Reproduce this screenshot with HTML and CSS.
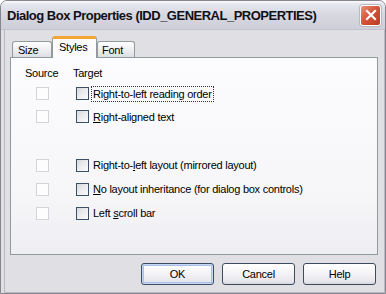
FILE: index.html
```html
<!DOCTYPE html>
<html lang="en">
<head>
  <meta charset="UTF-8" />
  <title>Dialog Box Properties</title>
  <link rel="stylesheet" href="styles.css">
</head>
<body>

<div class="ventana">
  <div class="barra_titulo">
    <span class="titulo">Dialog Box Properties (IDD_GENERAL_PROPERTIES)</span>
    <span class="cerrar">
      <svg width="12" height="12" viewBox="0 0 12 12">
        <path d="M2 2 L10 10 M10 2 L2 10" stroke="#fff" stroke-width="2.2" stroke-linecap="square" />
      </svg>
    </span>
  </div>

  <div class="cliente">
    <!-- pestañas -->
    <div class="pestanas">
      <div class="pestana p_size">Size</div>
      <div class="pestana activa">Styles</div>
      <div class="pestana p_font">Font</div>
    </div>

    <div class="panel">
      <div class="fila cabecera">
        <span class="col_origen">Source</span>
        <span class="col_destino">Target</span>
      </div>

      <div class="fila">
        <span class="col_origen"><span class="casilla apagada"></span></span>
        <span class="col_destino"><span class="casilla"></span><span class="texto foco">Ri<u>g</u>ht-to-left reading order</span></span>
      </div>
      <div class="fila">
        <span class="col_origen"><span class="casilla apagada"></span></span>
        <span class="col_destino"><span class="casilla"></span><span class="texto"><u>R</u>ight-aligned text</span></span>
      </div>

      <div class="grupo">
        <div class="fila alta">
          <span class="col_origen"><span class="casilla apagada"></span></span>
          <span class="col_destino"><span class="casilla"></span><span class="texto">Right-to-<u>l</u>eft layout (mirrored layout)</span></span>
        </div>
        <div class="fila alta">
          <span class="col_origen"><span class="casilla apagada"></span></span>
          <span class="col_destino"><span class="casilla"></span><span class="texto"><u>N</u>o layout inheritance (for dialog box controls)</span></span>
        </div>
        <div class="fila alta">
          <span class="col_origen"><span class="casilla apagada"></span></span>
          <span class="col_destino"><span class="casilla"></span><span class="texto">Left <u>s</u>croll bar</span></span>
        </div>
      </div>
    </div>

    <div class="botones">
      <button type="button" class="boton defecto">OK</button>
      <button type="button" class="boton">Cancel</button>
      <button type="button" class="boton">Help</button>
    </div>
  </div>
</div>

</body>
</html>
```

FILE: styles.css
```css
html, body {
  margin: 0;
  padding: 0;
  background: #fff;
}

.ventana {
  width: 386px;
  height: 294px;
  box-sizing: border-box;
  border: 1px solid #85848f;
  border-radius: 7px 7px 0 0;
  background: #e0dfe3;
  display: flex;
  flex-direction: column;
  font-family: 'Liberation Sans', Arial, sans-serif;
  font-size: 11px;
  letter-spacing: -0.25px;
  color: #000;
  overflow: hidden;
}

.barra_titulo {
  height: 28px;
  flex: none;
  display: flex;
  align-items: center;
  justify-content: space-between;
  padding: 0 4px 0 6px;
  background: linear-gradient(#fdfdfd 0, #e6e6ee 3px, #d7d7e0 50%, #cfcfd9 100%);
  border-bottom: 1px solid #c2c2cc;
}

.titulo {
  font-weight: bold;
  font-size: 13px;
  letter-spacing: -0.5px;
  color: #101018;
  padding-top: 1px;
}

.cerrar {
  width: 19px;
  height: 19px;
  border: 1px solid #fff;
  border-radius: 3px;
  background: linear-gradient(135deg, #e9917b 0%, #d2573c 45%, #bb3a20 100%);
  display: flex;
  align-items: center;
  justify-content: center;
  box-shadow: 0 0 0 1px #b9b9c4;
}

.cliente {
  flex: 1;
  display: flex;
  flex-direction: column;
  padding: 6px 7px 0 9px;
  box-shadow: inset 3px 0 0 #e0dfe3, inset 4px 0 0 #b9b8c3, inset -1px 0 0 #b9b8c3, inset 0 -1px 0 #b9b8c3;
}

.pestanas {
  display: flex;
  align-items: flex-end;
  height: 21px;
  padding-left: 2px;
}

.pestana {
  box-sizing: border-box;
  height: 16px;
  line-height: 16px;
  padding-left: 5px;
  border: 1px solid #919b9c;
  border-bottom: none;
  border-radius: 3px 3px 0 0;
  background: linear-gradient(#fefefe, #ececf0 60%, #dcdce4);
  position: relative;
}

.pestana.p_size {
  width: 40px;
}

.pestana.p_font {
  width: 38px;
  padding-left: 4px;
}

.pestana.activa {
  width: 45px;
  height: 22px;
  line-height: 16px;
  margin-bottom: -1px;
  padding-left: 6px;
  border-top: 3px solid #f3a535;
  background: #fcfcfe;
  z-index: 1;
}

.panel {
  height: 198px;
  box-sizing: border-box;
  border: 1px solid #919b9c;
  background: linear-gradient(#fcfcfe, #f6f6f9 70%, #eeeef2);
  padding: 6px 0 0 14px;
}

.fila {
  display: flex;
  align-items: center;
  height: 23px;
}

.fila.cabecera {
  height: 17px;
  margin-bottom: 1px;
}

.fila.alta {
  height: 24px;
}

.grupo {
  margin-top: 25px;
}

.col_origen {
  width: 51px;
  flex: none;
  display: flex;
}

.col_origen .casilla {
  margin-left: 11px;
}

.col_destino {
  display: flex;
  align-items: center;
}

.cabecera .col_destino {
  margin-left: -3px;
}

.casilla {
  width: 11px;
  height: 11px;
  flex: none;
  border: 1px solid #3b4f66;
  background: linear-gradient(135deg, #d9d9de 0%, #eeeef0 55%, #fbfbfb 100%);
}

.casilla.apagada {
  border-color: #d4d4d8;
  background: #fdfdfd;
}

.texto {
  margin-left: 2px;
  padding: 1px 1px;
  border: 1px dotted transparent;
  white-space: nowrap;
}

.texto.foco {
  border-color: #333;
}

.botones {
  display: flex;
  justify-content: flex-end;
  gap: 8px;
  margin: 8px 2px 0 0;
}

.boton {
  width: 73px;
  height: 22px;
  padding: 0;
  font-family: 'Liberation Sans', Arial, sans-serif;
  font-size: 11px;
  letter-spacing: -0.25px;
  color: #000;
  border: 1px solid #3d4b5f;
  border-radius: 3px;
  background: linear-gradient(#ffffff, #f3f3f6 50%, #e4e4ea 90%, #d4d4dc);
}

.boton.defecto {
  box-shadow: inset 0 0 0 1px #c8d8f0, inset 0 0 0 2px #a8c0e8;
}
```
